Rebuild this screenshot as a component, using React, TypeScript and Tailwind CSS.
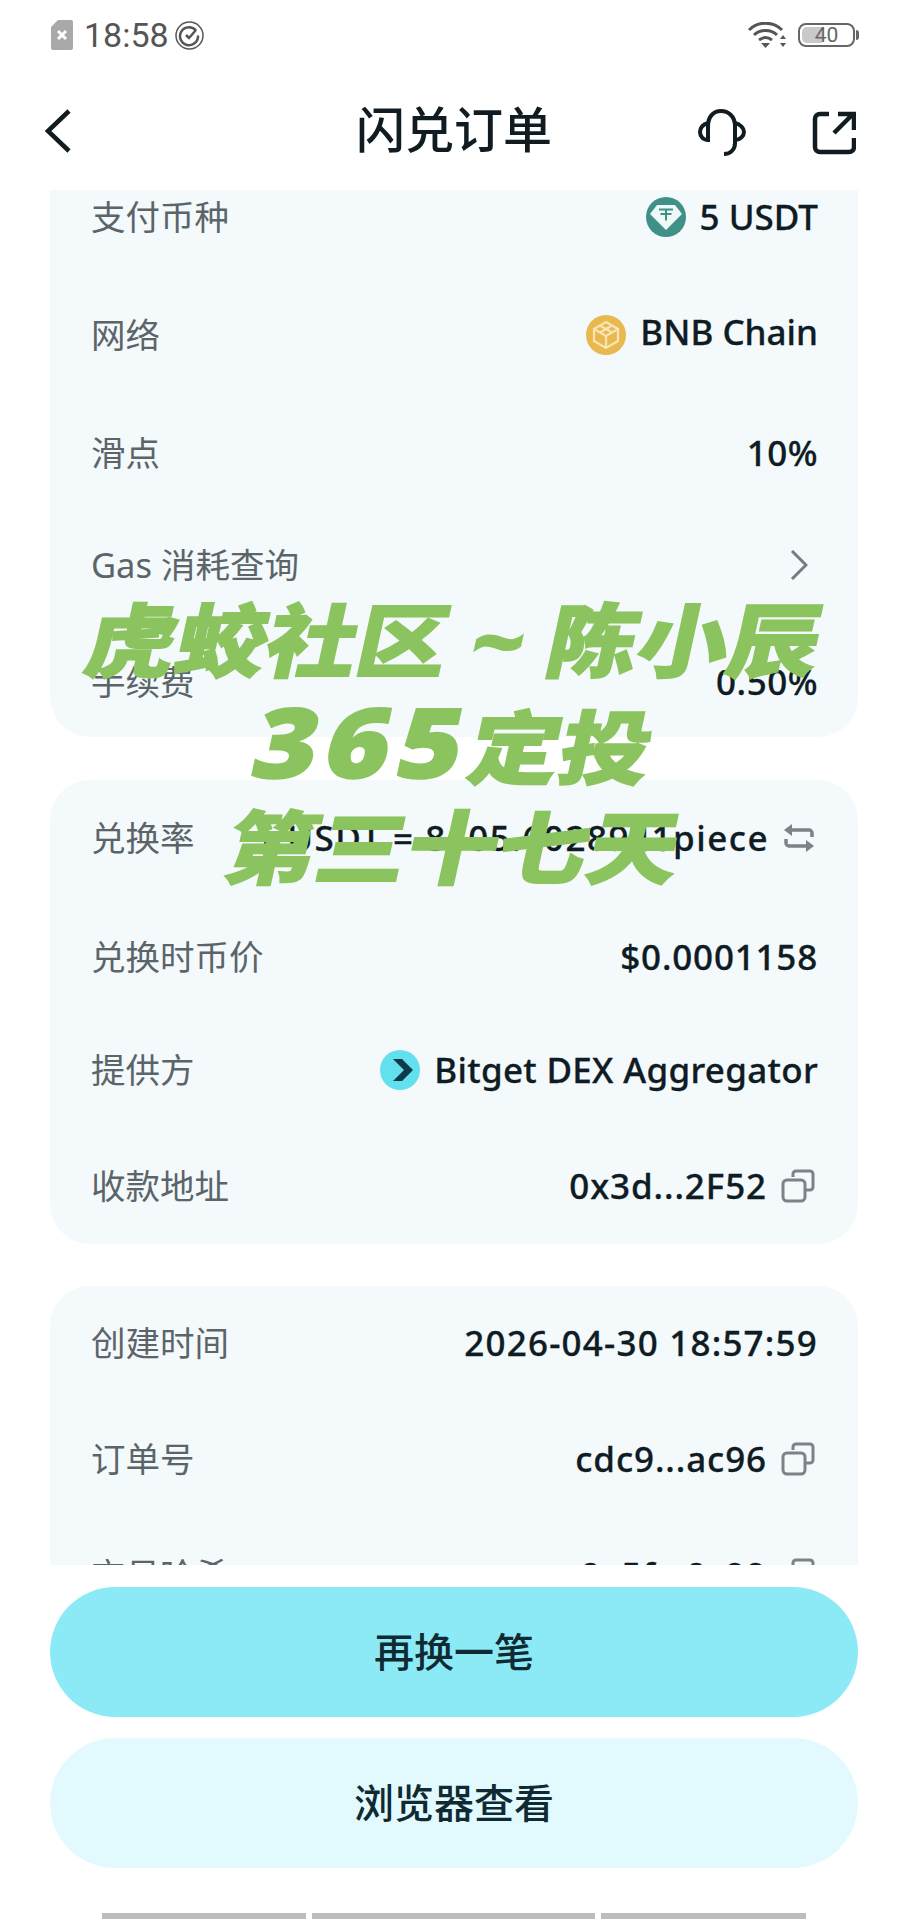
import type { JSX, ReactNode } from "react";

const FONT = "font-['Noto_Sans','Noto_Sans_CJK_SC',sans-serif]";

function TetherIcon(): JSX.Element {
  return (
    <svg width="40" height="40" viewBox="0 0 40 40" className="shrink-0">
      <circle cx="20" cy="20" r="20" fill="#3f9188" />
      <path d="M11 8h18l7 9-16 16L4 17z" fill="#eef8f6" />
      <path d="M13 12.5h14M20 12.5v11M14.5 17h11" stroke="#3f9188" strokeWidth="2" fill="none" />
    </svg>
  );
}

function BnbIcon(): JSX.Element {
  return (
    <svg width="40" height="40" viewBox="0 0 40 40" className="shrink-0">
      <circle cx="20" cy="20" r="20" fill="#e9b84f" />
      <g fill="none" stroke="#f8e4b4" strokeWidth="2.2">
        <path d="M20 7l12 7v12l-12 7-12-7V14z" />
        <path d="M8 14l12 7 12-7M20 21v12" />
        <path d="M14 10.500l12 7M26 10.500l-12 7" />
      </g>
    </svg>
  );
}

function BitgetIcon(): JSX.Element {
  return (
    <svg width="40" height="40" viewBox="0 0 40 40" className="shrink-0">
      <circle cx="20" cy="20" r="20" fill="#63e0ee" />
      <path d="M13 9h9l11 11-11 11h-9l11-11z" fill="#0f3a4a" />
    </svg>
  );
}

function CopyIcon(): JSX.Element {
  return (
    <svg width="34" height="34" viewBox="0 0 34 34" fill="none" stroke="#7b8386" strokeWidth="3" className="mr-[3px] shrink-0">
      <path d="M12 8V5a3 3 0 0 1 3-3h14a3 3 0 0 1 3 3v13a3 3 0 0 1-3 3h-4" />
      <rect x="2" y="11" width="22" height="21" rx="4" />
    </svg>
  );
}

function SwapIcon(): JSX.Element {
  return (
    <svg width="32" height="32" viewBox="0 0 32 32" fill="none" className="mr-[3px] shrink-0">
      <path d="M7 8h19a3 3 0 0 1 3 3v4" stroke="#7b8386" strokeWidth="3.5" />
      <path d="M9 2v12L1 8z" fill="#7b8386" />
      <path d="M25 24H6a3 3 0 0 1-3-3v-4" stroke="#7b8386" strokeWidth="3.5" />
      <path d="M23 18v12l8-6z" fill="#7b8386" />
    </svg>
  );
}

function Row({ label, gap, children }: { label: string; gap: string; children: ReactNode }): JSX.Element {
  return (
    <div className={`flex h-[50px] items-center justify-between ${gap}`}>
      <span className="text-[34.5px] text-[#5b6569]">{label}</span>
      <div className="flex items-center gap-[14px] text-[35px] font-medium text-[#0f1c24] [-webkit-text-stroke:0.3px_#0f1c24]">
        {children}
      </div>
    </div>
  );
}

function StatusBar(): JSX.Element {
  return (
    <div className="flex h-[70px] items-start justify-between pl-[51px] pr-[49px] pt-[20px]">
      <div className="flex items-center">
        <svg width="22" height="30" viewBox="0 0 22 30">
          <path d="M7 0h13a2 2 0 0 1 2 2v26a2 2 0 0 1-2 2H2a2 2 0 0 1-2-2V7z" fill="#a9a9a9" />
          <path d="M7 11l8 8M15 11l-8 8" stroke="#fff" strokeWidth="3" />
        </svg>
        <span className="ml-[11px] font-['Roboto',sans-serif] text-[34px] leading-[30px] text-[#555]">18:58</span>
        <svg width="29" height="29" viewBox="0 0 29 29" fill="none" stroke="#555" className="ml-[6px]">
          <circle cx="14.5" cy="14.5" r="13.5" strokeWidth="1.5" />
          <path d="M21 9.5a9 9 0 1 0 2 5" strokeWidth="2.5" />
          <path d="M11 14l3 3 7-8" strokeWidth="2.5" />
        </svg>
      </div>
      <div className="flex items-center gap-[11px] pt-[2px]">
        <svg width="39" height="26" viewBox="0 0 39 26" fill="none" stroke="#555" strokeWidth="3">
          <path d="M1 8c9-9 24-9 33 0" />
          <path d="M6 13c6-6 17-6 23 0" />
          <path d="M11 18c4-3 9-3 13 0" />
          <path d="M13 21h9l-4.500 5z" fill="#555" stroke="none" />
          <path d="M35 13l3 4h-6zM35 25l3-4h-6z" fill="#555" stroke="none" />
        </svg>
        <div className="relative mr-[4px] flex h-[24px] w-[57px] items-center justify-center rounded-[8px] border-2 border-[#666]">
          <div className="absolute inset-y-[2px] left-[2px] w-[20px] rounded-l-[5px] bg-[#c9c9c9]" />
          <span className="relative font-['Roboto',sans-serif] text-[21px] leading-none text-[#666]">40</span>
          <div className="absolute right-[-6px] h-[10px] w-[3px] rounded-r-sm bg-[#666]" />
        </div>
      </div>
    </div>
  );
}

function Header(): JSX.Element {
  return (
    <div className="relative flex h-[120px] items-center justify-center">
      <svg width="28" height="44" viewBox="0 0 28 44" fill="none" stroke="#101c22" strokeWidth="4.500" className="absolute left-[44px] top-[39px]">
        <path d="M25 2L4 22l21 20" />
      </svg>
      <span className="text-[49px] font-medium text-[#101c22]">闪兑订单</span>
      <svg width="48" height="48" viewBox="0 0 48 48" fill="none" stroke="#101c22" strokeWidth="4" className="absolute left-[698px] top-[39px]">
        <path d="M10 31V17C10 7 16 2 23 2s14 5 14 15v17c0 6-4 11-11 11" />
        <path d="M10 14C5 15 2 19 2 23s3 8 8 8z" />
        <path d="M37 14c5 1 9 5 9 9s-4 8-9 8" />
      </svg>
      <svg width="44" height="44" viewBox="0 0 44 44" fill="none" stroke="#101c22" strokeWidth="4.500" className="absolute left-[812px] top-[41px]">
        <path d="M17 3H8a5 5 0 0 0-5 5v28a5 5 0 0 0 5 5h29a5 5 0 0 0 5-5v-9" />
        <path d="M22 22L41 3M26 3h16v16" />
      </svg>
    </div>
  );
}

function Content(): JSX.Element {
  return (
    <div className="h-[1375px] shrink-0 overflow-hidden px-[50px]">
      <div className="mt-[-40px] rounded-[40px] bg-[#f4f9fb] pb-[30px] pl-[41px] pr-[40px] pt-[42px]">
        <Row label="支付币种" gap="">
          <TetherIcon />
          <span>5 USDT</span>
        </Row>
        <Row label="网络" gap="mt-[68px]">
          <BnbIcon />
          <span className="mb-[6px]">BNB Chain</span>
        </Row>
        <Row label="滑点" gap="mt-[68px]">
          <span className="tracking-[0.5px]">10%</span>
        </Row>
        <Row label="Gas 消耗查询" gap="mt-[62px]">
          <svg width="18" height="30" viewBox="0 0 18 30" fill="none" stroke="#747c80" strokeWidth="3" className="mr-[10px]">
            <path d="M2 1l14 14L2 29" />
          </svg>
        </Row>
        <Row label="手续费" gap="mt-[67px]">
          <span className="tracking-[0.5px]">0.50%</span>
        </Row>
      </div>
      <div className="mt-[43px] rounded-[40px] bg-[#f4f9fb] pb-[33px] pl-[41px] pr-[40px] pt-[33px]">
        <Row label="兑换率" gap="">
          <span className="tracking-[1.5px]">1 USDT = 8605.6028941piece</span>
          <SwapIcon />
        </Row>
        <Row label="兑换时币价" gap="mt-[69px]">
          <span className="tracking-[0.8px]">$0.0001158</span>
        </Row>
        <Row label="提供方" gap="mt-[63px]">
          <BitgetIcon />
          <span className="tracking-[0.3px]">Bitget DEX Aggregator</span>
        </Row>
        <Row label="收款地址" gap="mt-[66px]">
          <span className="tracking-[0.9px]">0x3d...2F52</span>
          <CopyIcon />
        </Row>
      </div>
      <div className="mt-[42px] rounded-[40px] bg-[#f4f9fb] pb-[33px] pl-[41px] pr-[40px] pt-[32px]">
        <Row label="创建时间" gap="">
          <span className="tracking-[1.2px]">2026-04-30 18:57:59</span>
        </Row>
        <Row label="订单号" gap="mt-[66px]">
          <span className="tracking-[0.9px]">cdc9...ac96</span>
          <CopyIcon />
        </Row>
        <Row label="交易哈希" gap="mt-[66px]">
          <span className="tracking-[0.9px]">0x5f...0c99</span>
          <CopyIcon />
        </Row>
      </div>
    </div>
  );
}

function Footer(): JSX.Element {
  return (
    <div className="flex flex-col bg-white px-[50px] pt-[22px]">
      <button className="h-[130px] rounded-[65px] bg-[#8ceaf6] text-[40px] font-medium text-[#0f2a33]">再换一笔</button>
      <button className="mt-[21px] h-[130px] rounded-[65px] bg-[#e2fafe] text-[40px] font-medium text-[#0f2a33]">浏览器查看</button>
      <div className="mt-[45px] flex h-[6px] justify-center gap-[6px]">
        <div className="w-[204px] bg-[#bdbdbd]" />
        <div className="w-[283px] bg-[#bdbdbd]" />
        <div className="w-[205px] bg-[#bdbdbd]" />
      </div>
    </div>
  );
}

function Watermark(): JSX.Element {
  return (
    <div className="absolute left-0 top-[590px] w-full scale-x-[1.13] text-center text-[80px] font-black leading-[100px] text-[#8bc45f] [-webkit-text-stroke:1.5px_#8bc45f]">
      <div className="skew-x-[-11deg]">虎蛟社区 ~ 陈小辰</div>
      <div className="skew-x-[-11deg]">
        <span className="text-[97px] leading-[100px] tracking-[7px]">365</span>定投
      </div>
      <div className="skew-x-[-11deg]">第三十七天</div>
    </div>
  );
}

export default function App(): JSX.Element {
  return (
    <div className={`relative flex h-[1920px] w-[908px] flex-col overflow-hidden bg-white ${FONT}`}>
      <StatusBar />
      <Header />
      <Content />
      <Footer />
      <Watermark />
    </div>
  );
}
